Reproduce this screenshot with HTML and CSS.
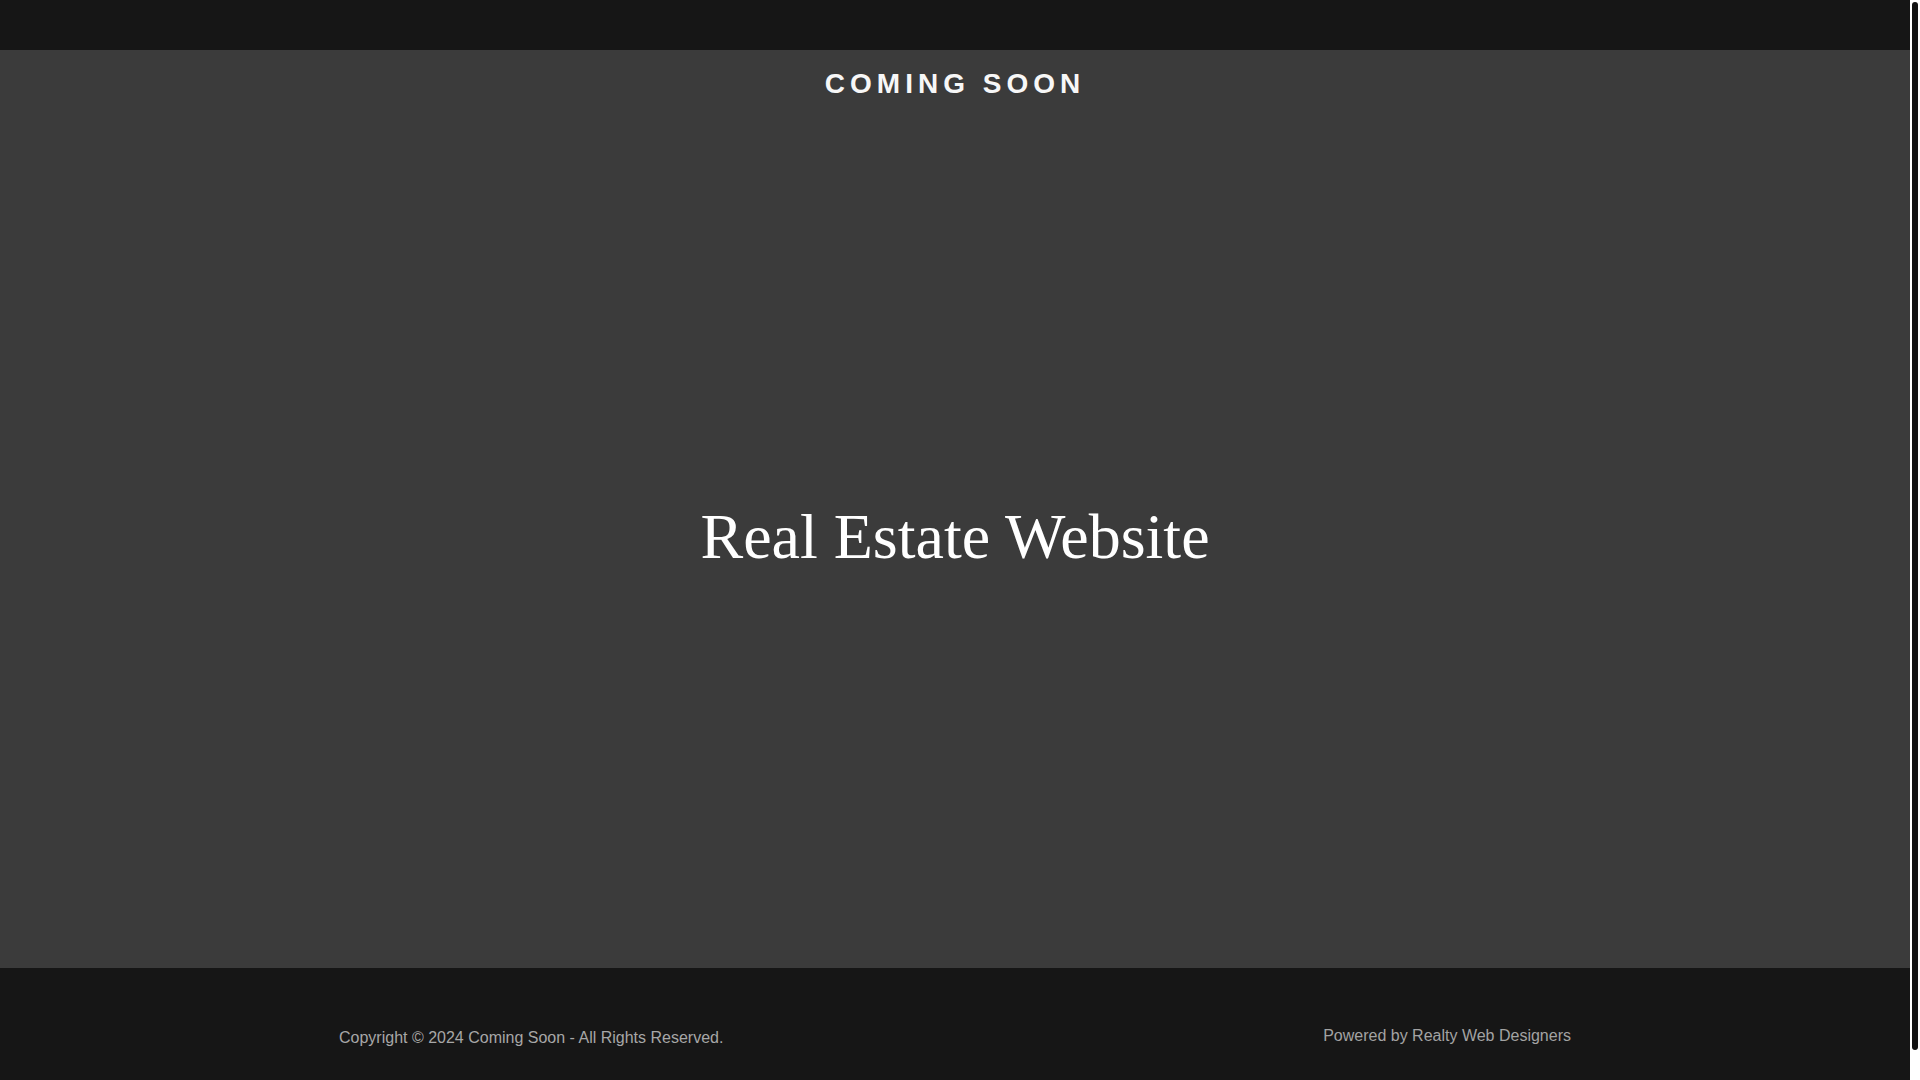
FILE: index.html
```html
<!DOCTYPE html>
<html lang="en">
<head>
<meta charset="utf-8">
<title>Coming Soon</title>
<link rel="stylesheet" href="styles.css">
</head>
<body>
<div class="page">
  <div class="topbar"></div>
  <main class="hero">
    <div class="brand">COMING SOON</div>
    <h1 class="headline">Real Estate Website</h1>
  </main>
  <footer class="footer">
    <div class="footer-inner">
      <p class="copyright">Copyright © 2024 Coming Soon - All Rights Reserved.</p>
      <p class="powered">Powered by Realty Web Designers</p>
    </div>
  </footer>
</div>
<div class="rail" aria-hidden="true"><div class="thumb"></div></div>
</body>
</html>
```

FILE: styles.css
```css
html, body {
  margin: 0;
  height: 100%;
  overflow: hidden;
  background: #ffffff;
}
body {
  display: flex;
  font-family: "Liberation Sans", Arial, sans-serif;
}
.page {
  flex: 1;
  min-width: 0;
  height: 100vh;
  overflow: hidden;
  background: #161616;
}
.rail {
  width: 10px;
  flex: none;
  background: #ffffff;
  box-sizing: border-box;
  padding: 2px;
}
.thumb {
  height: 1048px;
  background: #111111;
  border-radius: 3px;
}
.topbar {
  height: 50px;
  background: #161616;
}
.hero {
  height: 918px;
  box-sizing: border-box;
  background: #3b3b3b;
  padding-top: 16px;
  text-align: center;
}
.brand {
  font-family: "Liberation Sans", Arial, sans-serif;
  font-weight: 700;
  font-size: 28px;
  line-height: 35px;
  letter-spacing: 5px;
  color: #f7f7f7;
}
.headline {
  margin: 398px 0 0;
  font-family: "Liberation Serif", "Times New Roman", serif;
  font-weight: 400;
  font-size: 64px;
  line-height: 76.8px;
  letter-spacing: 0;
  color: #ffffff;
}
.footer {
  background: #161616;
  padding: 57.5px 0 59.5px;
}
.footer-inner {
  max-width: 1232px;
  margin: 0 auto;
  display: flex;
  justify-content: space-between;
  align-items: flex-start;
}
.copyright {
  margin: 0;
  font-size: 16px;
  line-height: 24px;
  color: #a7a7a7;
}
.powered {
  margin: 0;
  font-size: 16px;
  line-height: 19px;
  color: #a3a3a3;
}
```
